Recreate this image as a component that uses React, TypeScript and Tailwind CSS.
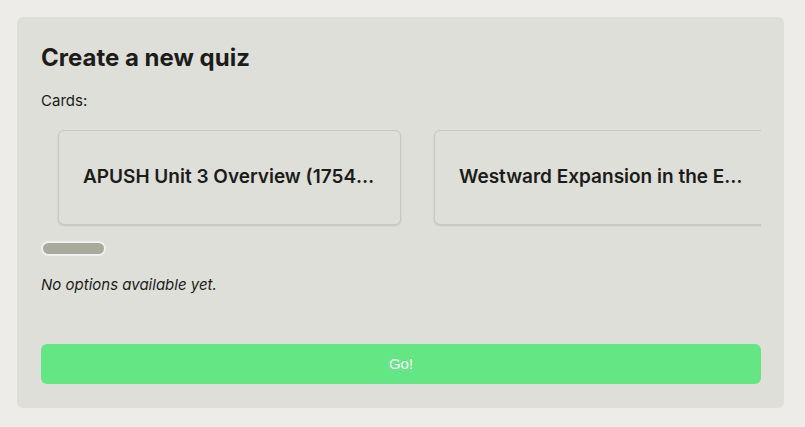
export default function App() {
  const cards = [
    "APUSH Unit 3 Overview (1754–1800)",
    "Westward Expansion in the Early Republic",
  ];

  return (
    <div className="min-h-screen w-full bg-[#edece8] pt-[17px] pl-[17px] font-['Inter',sans-serif] text-[#1c1c1a]">
      <div className="w-[767px] rounded-md bg-[#dfdfd9] px-6 pt-[27px] pb-6">
        {/* HEADER */}
        <h1 className="text-[24px] font-bold leading-7">Create a new quiz</h1>
        <p className="mt-[19px] text-[15px] leading-5">Cards:</p>

        {/* CARDS */}
        <div className="mt-[19px] w-[720px] overflow-hidden">
          <div className="flex gap-[33px] pl-[17px] pb-[3px]">
            {cards.map((title) => (
              <div
                key={title}
                className="flex h-[95px] w-[343px] shrink-0 items-center rounded-md border border-[#c9c9c3] bg-[#dfdfd9] px-6 shadow-[0_1px_2px_rgba(0,0,0,0.12)]"
              >
                <span className="truncate text-[19px] font-semibold">{title}</span>
              </div>
            ))}
          </div>
        </div>

        {/* SCROLLBAR */}
        <div className="mt-[13px] h-[15px] w-[65px] rounded-full border-2 border-[#f0f0ec] bg-[#a8aa9c]" />

        <p className="mt-[19px] text-[15px] italic leading-5">No options available yet.</p>

        {/* ACCIONES */}
        <button className="mt-[49px] flex h-10 w-[720px] items-center justify-center rounded-md bg-[#64e685] font-['Liberation_Sans',sans-serif] text-[15px] text-white">
          Go!
        </button>
      </div>
    </div>
  );
}
